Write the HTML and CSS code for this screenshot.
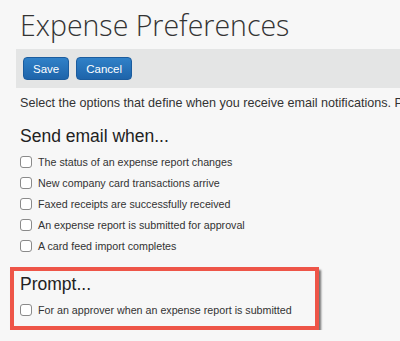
FILE: index.html
```html
<!DOCTYPE html>
<html lang="en">
<head>
    <meta charset="UTF-8">
    <title>Expense Preferences</title>
    <link rel="stylesheet" href="styles.css">
</head>
<body>
    <h1 class="page-title">Expense Preferences</h1>

    <div class="toolbar">
        <button class="btn">Save</button>
        <button class="btn">Cancel</button>
    </div>

    <p class="intro">Select the options that define when you receive email notifications. Prompts appear when you log in.</p>

    <div class="section">
        <h2>Send email when...</h2>
        <label class="row"><input type="checkbox"> The status of an expense report changes</label>
        <label class="row"><input type="checkbox"> New company card transactions arrive</label>
        <label class="row"><input type="checkbox"> Faxed receipts are successfully received</label>
        <label class="row"><input type="checkbox"> An expense report is submitted for approval</label>
        <label class="row"><input type="checkbox"> A card feed import completes</label>
    </div>

    <div class="section highlight">
        <h2>Prompt...</h2>
        <label class="row"><input type="checkbox"> For an approver when an expense report is submitted</label>
    </div>
</body>
</html>
```

FILE: styles.css
```css
body {
    font-family: "Liberation Sans", Arial, sans-serif;
    background-color: #f7f7f7;
    color: #333;
    margin: 0;
    overflow: hidden;
}

.page-title {
    font-family: "Open Sans", sans-serif;
    font-weight: 300;
    font-size: 28.5px;
    line-height: 38px;
    color: #333;
    margin: 6px 0 5px 20px;
}

.toolbar {
    margin-left: 16px;
    height: 39px;
    padding: 0 7px;
    background-color: #e4e5e5;
    display: flex;
    align-items: center;
    gap: 7px;
}

.btn {
    height: 23px;
    padding: 0 9px;
    font-family: "Liberation Sans", Arial, sans-serif;
    font-size: 11.5px;
    color: white;
    background: linear-gradient(#3081c8, #1e64aa);
    border: 1px solid #1b5c9e;
    border-radius: 4px;
}

.intro {
    margin: 7px 0 0 20px;
    font-size: 12.6px;
    line-height: 16px;
    white-space: nowrap;
    overflow: hidden;
}

.section {
    margin-left: 20px;
}

h2 {
    font-weight: normal;
    font-size: 17.5px;
    line-height: 24px;
    margin: 13px 0 3px 0;
    color: #222;
}

.row {
    display: flex;
    align-items: center;
    height: 21px;
    font-size: 10.7px;
}

.row input {
    appearance: none;
    width: 12px;
    height: 12px;
    margin: 0 6px 0 0;
    background: white;
    border: 1px solid #8a8a8a;
    border-radius: 3px;
}

.highlight {
    margin: 11px 0 0 10px;
    width: 289px;
    padding: 1px 6px 6px 6px;
    border: 4px solid #ee5548;
    box-shadow: 2px 3px 2px rgba(0, 0, 0, 0.55);
}

.highlight h2 {
    margin-top: 0;
}
```
